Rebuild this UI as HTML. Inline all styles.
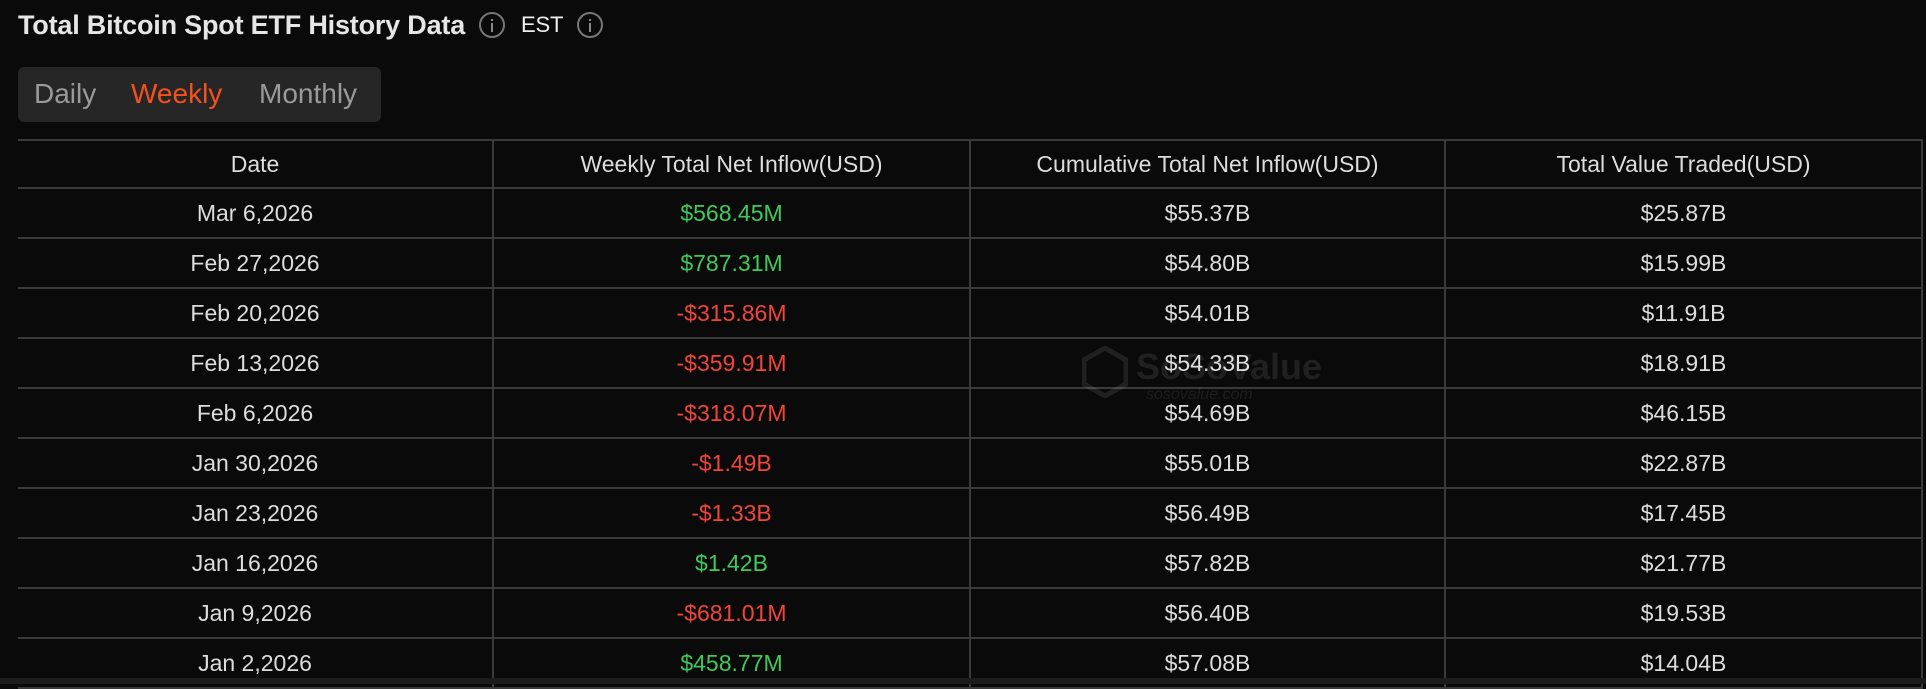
<!DOCTYPE html>
<html><head><meta charset="utf-8"><style>
html,body{margin:0;padding:0;background:#0a0a0a;width:1926px;height:684px;overflow:hidden;font-family:"Liberation Sans",sans-serif;color:#ddd}
.title{position:absolute;left:18px;top:10px;font-size:27px;font-weight:bold;color:#e6e6e6;letter-spacing:-0.2px;display:flex;align-items:center;height:30px}
.ic{display:inline-block;width:26px;height:26px;border:2px solid #777;border-radius:50%;box-sizing:border-box;position:relative;margin-left:14px}
.ic:before{content:"";position:absolute;left:10px;top:5px;width:2px;height:2px;background:#888}
.ic:after{content:"";position:absolute;left:10px;top:9px;width:2px;height:9px;background:#888}
.est{font-weight:normal;font-size:22px;margin-left:16px;color:#eee}
.tabs{position:absolute;left:18px;top:67px;width:363px;height:55px;background:#262626;border-radius:6px;font-size:28px;color:#9a9a9a}
.tabs span{position:absolute;top:11px}
table{position:absolute;left:18px;top:139px;border-collapse:collapse;width:1904px;table-layout:fixed}
td,th{border:2px solid #3a3a3a;height:48px;text-align:center;font-size:23px;font-weight:normal;color:#ddd;padding:0}
th{height:46px}
tr td:first-child,tr th:first-child{border-left:none}
.g{color:#3fca5b}.r{color:#f1453b}
.wm{position:absolute;left:1136px;top:346px;color:rgba(255,255,255,0.09);font-weight:bold;font-size:36px}
.wm2{position:absolute;left:1146px;top:386px;color:rgba(255,255,255,0.08);font-style:italic;font-size:16px}
.sb{position:absolute;left:0;top:678px;width:1926px;height:6px;background:#1c1c1c}
</style></head><body>
<div class="title">Total Bitcoin Spot ETF History Data<span class="ic"></span><span class="est">EST</span><span class="ic"></span></div>
<div class="tabs"><span style="left:16px">Daily</span><span style="left:113px;color:#f5511e">Weekly</span><span style="left:241px">Monthly</span></div>
<table>
<colgroup><col style="width:475px"><col style="width:477px"><col style="width:475px"><col style="width:477px"></colgroup>
<tr><th>Date</th><th>Weekly Total Net Inflow(USD)</th><th>Cumulative Total Net Inflow(USD)</th><th>Total Value Traded(USD)</th></tr>
<tr><td>Mar 6,2026</td><td class="g">$568.45M</td><td>$55.37B</td><td>$25.87B</td></tr>
<tr><td>Feb 27,2026</td><td class="g">$787.31M</td><td>$54.80B</td><td>$15.99B</td></tr>
<tr><td>Feb 20,2026</td><td class="r">-$315.86M</td><td>$54.01B</td><td>$11.91B</td></tr>
<tr><td>Feb 13,2026</td><td class="r">-$359.91M</td><td>$54.33B</td><td>$18.91B</td></tr>
<tr><td>Feb 6,2026</td><td class="r">-$318.07M</td><td>$54.69B</td><td>$46.15B</td></tr>
<tr><td>Jan 30,2026</td><td class="r">-$1.49B</td><td>$55.01B</td><td>$22.87B</td></tr>
<tr><td>Jan 23,2026</td><td class="r">-$1.33B</td><td>$56.49B</td><td>$17.45B</td></tr>
<tr><td>Jan 16,2026</td><td class="g">$1.42B</td><td>$57.82B</td><td>$21.77B</td></tr>
<tr><td>Jan 9,2026</td><td class="r">-$681.01M</td><td>$56.40B</td><td>$19.53B</td></tr>
<tr><td>Jan 2,2026</td><td class="g">$458.77M</td><td>$57.08B</td><td>$14.04B</td></tr>
</table>
<svg style="position:absolute;left:1082px;top:346px" width="46" height="52" viewBox="0 0 46 52"><path d="M23 2 L44 14 L44 38 L23 50 L2 38 L2 14 Z" fill="none" stroke="rgba(255,255,255,0.09)" stroke-width="5"/></svg>
<div class="wm">SoSoValue</div>
<div class="wm2">sosovalue.com</div>
<div class="sb"></div>
</body></html>
